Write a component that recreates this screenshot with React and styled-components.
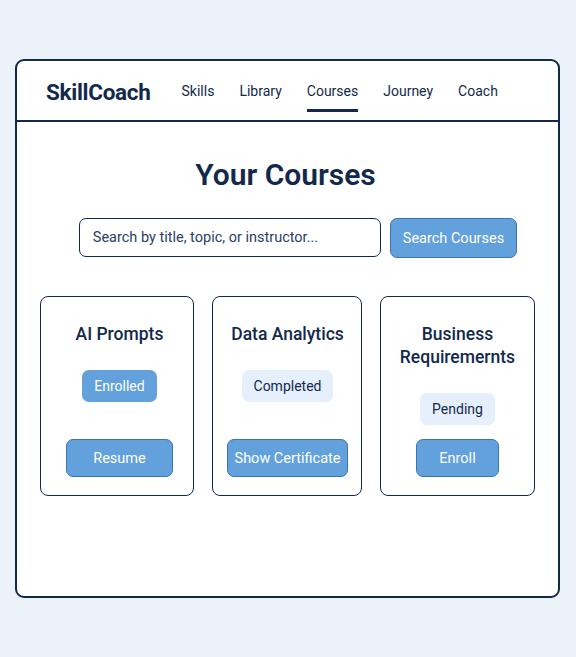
import React from 'react';
import styled, { createGlobalStyle } from 'styled-components';

const navy = '#13294b';
const blue = '#62a1dc';

const GlobalStyle = createGlobalStyle`
    html, body {
        margin: 0;
        padding: 0;
        background: #ecf2fa;
        font-family: Roboto, "Liberation Sans", sans-serif;
        color: ${navy};
    }
`;

const Page = styled.div`
    width: 576px;
    height: 657px;
    padding: 59px 16px 0 15px;
    box-sizing: border-box;
`;

const Frame = styled.div`
    height: 539px;
    box-sizing: border-box;
    background: #fff;
    border: 2px solid ${navy};
    border-radius: 9px;
    display: flex;
    flex-direction: column;
`;

const Header = styled.header`
    height: 61px;
    box-sizing: border-box;
    border-bottom: 2px solid ${navy};
    display: flex;
    align-items: center;
    padding-left: 29px;
`;

const Logo = styled.div`
    font-size: 22.5px;
    font-weight: 700;
    letter-spacing: -0.3px;
    margin-right: 31px;
    margin-top: 2px;
`;

const Nav = styled.nav`
    display: flex;
    gap: 25px;
    height: 100%;
`;

const NavLink = styled.a`
    position: relative;
    display: flex;
    align-items: center;
    font-size: 14px;
    color: ${navy};
    text-decoration: none;
    &::after {
        content: '';
        display: ${(p) => (p.$active ? 'block' : 'none')};
        position: absolute;
        left: 0;
        right: 0;
        top: 48px;
        height: 3px;
        background: ${navy};
    }
`;

const Main = styled.main`
    display: flex;
    flex-direction: column;
    align-items: center;
    padding-top: 34px;
`;

const Title = styled.h1`
    margin: 0;
    font-size: 30px;
    font-weight: 600;
    line-height: 38px;
    margin-left: -4px;
`;

const SearchRow = styled.div`
    display: flex;
    gap: 9px;
    margin-top: 24px;
    margin-left: 21px;
`;

const SearchInput = styled.input`
    width: 302px;
    height: 39px;
    box-sizing: border-box;
    border: 1.5px solid ${navy};
    border-radius: 7px;
    padding: 0 13px;
    font-family: inherit;
    font-size: 14.5px;
    color: ${navy};
    &::placeholder {
        color: #2b4068;
    }
`;

const Button = styled.button`
    height: ${(p) => p.$h || 38}px;
    padding: 0 ${(p) => p.$px || 12}px;
    box-sizing: border-box;
    background: ${blue};
    color: #fff;
    border: 1px solid #3b74b0;
    border-radius: 7px;
    font-family: inherit;
    font-size: 14.5px;
    cursor: pointer;
`;

const Cards = styled.div`
    display: flex;
    gap: 18px;
    margin-top: 38px;
`;

const Card = styled.div`
    width: ${(p) => p.$w}px;
    height: 200px;
    box-sizing: border-box;
    border: 1.5px solid ${navy};
    border-radius: 8px;
    display: flex;
    flex-direction: column;
    align-items: center;
    padding: 26px 0 18px ${(p) => p.$pl || 0}px;
`;

const CardTitle = styled.h2`
    margin: 0;
    font-size: 17.5px;
    font-weight: 500;
    line-height: 23px;
    text-align: center;
`;

const Badge = styled.span`
    margin-top: 24px;
    height: 32px;
    display: flex;
    align-items: center;
    padding: 0 12px;
    border-radius: 7px;
    font-size: 14px;
    background: ${(p) => (p.$filled ? blue : '#e5f0fc')};
    color: ${(p) => (p.$filled ? '#fff' : navy)};
`;

const CardButton = styled(Button)`
    margin-top: auto;
`;

const courses = [
    { title: 'AI Prompts', status: 'Enrolled', filled: true, action: 'Resume', w: 154, px: 26, pl: 5 },
    { title: 'Data Analytics', status: 'Completed', filled: false, action: 'Show Certificate', w: 150, px: 7, pl: 1 },
    { title: <>Business<br />Requiremernts</>, status: 'Pending', filled: false, action: 'Enroll', w: 155, px: 22, pl: 0 },
];

const navItems = ['Skills', 'Library', 'Courses', 'Journey', 'Coach'];

const App = () => (
    <Page>
        <GlobalStyle />
        <Frame>
            <Header>
                <Logo>SkillCoach</Logo>
                <Nav>
                    {navItems.map((item) => (
                        <NavLink key={item} $active={item === 'Courses'}>{item}</NavLink>
                    ))}
                </Nav>
            </Header>
            <Main>
                <Title>Your Courses</Title>
                <SearchRow>
                    <SearchInput placeholder="Search by title, topic, or instructor..." />
                    <Button $h={40} $px={12}>Search Courses</Button>
                </SearchRow>
                <Cards>
                    {courses.map((c, i) => (
                        <Card key={i} $w={c.w} $pl={c.pl}>
                            <CardTitle>{c.title}</CardTitle>
                            <Badge $filled={c.filled}>{c.status}</Badge>
                            <CardButton $h={38} $px={c.px}>{c.action}</CardButton>
                        </Card>
                    ))}
                </Cards>
            </Main>
        </Frame>
    </Page>
);

export default App;
